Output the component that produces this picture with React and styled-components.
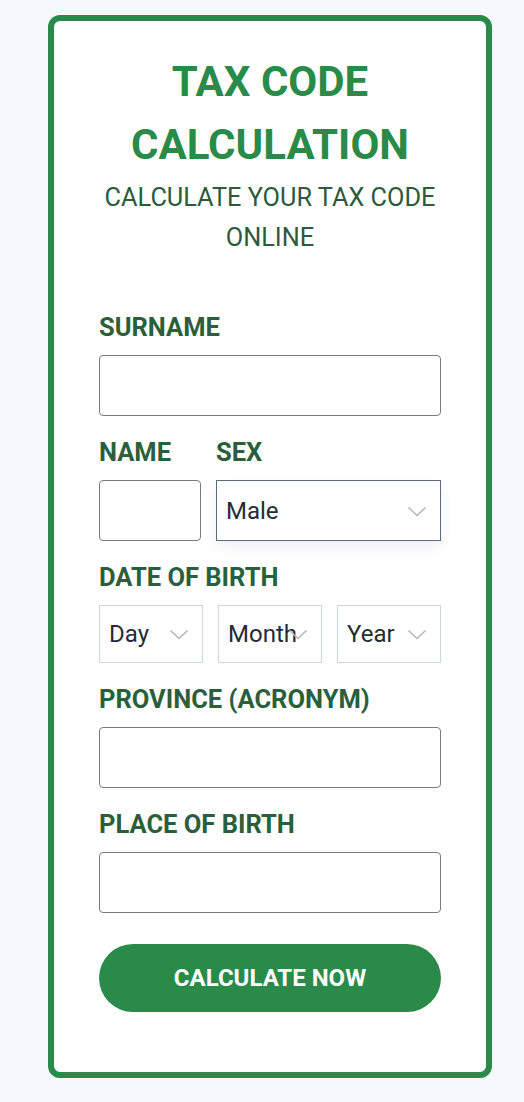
import React from "react";
import styled, { createGlobalStyle } from "styled-components";

const GlobalStyle = createGlobalStyle`
  html, body {
    margin: 0;
    padding: 0;
    background: #f5f8fc;
    font-family: Roboto, "Liberation Sans", Arial, sans-serif;
  }
`;

const Page = styled.div`
  min-height: 1102px;
  padding: 15px 0 0 48px;
  box-sizing: border-box;
`;

const Card = styled.form`
  width: 444px;
  height: 1063px;
  box-sizing: border-box;
  background: #ffffff;
  border: 6px solid #2a8a4a;
  border-radius: 12px;
  padding: 29px 45px 0;
  display: flex;
  flex-direction: column;
`;

const Title = styled.h1`
  margin: 0;
  text-align: center;
  color: #2a8a4a;
  font-size: 42px;
  line-height: 63px;
  font-weight: 700;
`;

const Subtitle = styled.p`
  margin: 2px 0 54px;
  text-align: center;
  color: #2b5a3c;
  font-size: 25.3px;
  line-height: 40px;
  font-weight: 400;
`;

const Field = styled.div`
  display: flex;
  flex-direction: column;
  margin-bottom: 21px;
  flex: ${(p) => p.$flex || "none"};
  min-width: 0;
`;

const Row = styled.div`
  display: flex;
  gap: 15px;
`;

const Label = styled.label`
  color: #2b5e3b;
  font-size: 25.5px;
  line-height: 30px;
  font-weight: 700;
  margin-bottom: 13px;
`;

const TextInput = styled.input`
  height: 61px;
  width: ${(p) => p.$width || "100%"};
  box-sizing: border-box;
  border: 1px solid #7a7a7a;
  border-radius: 4px;
  background: #fff;
  font: inherit;
  font-size: 24px;
  padding: 0 10px;
`;

const SelectWrap = styled.div`
  position: relative;
  flex: 1;
  min-width: 0;
`;

const Select = styled.select`
  appearance: none;
  width: 100%;
  height: ${(p) => (p.$light ? "58px" : "61px")};
  box-sizing: border-box;
  border: 1px solid ${(p) => (p.$light ? "#cbd6de" : "#5c6b7c")};
  border-radius: 0;
  background: #fff;
  color: #252c36;
  font: inherit;
  font-size: 24px;
  padding: 0 0 0 9px;
  box-shadow: ${(p) => (p.$light ? "none" : "0 6px 12px rgba(20, 40, 60, 0.07)")};
`;

const Chevron = styled.svg`
  position: absolute;
  right: 14px;
  top: 50%;
  width: 20px;
  height: 11px;
  margin-top: -5px;
  pointer-events: none;
`;

const Button = styled.button`
  margin-top: 10px;
  height: 68px;
  border: none;
  border-radius: 34px;
  background: #2a8a4a;
  color: #ffffff;
  font: inherit;
  font-size: 24px;
  font-weight: 700;
  cursor: pointer;
`;

const Arrow = () => (
  <Chevron viewBox="0 0 20 11" fill="none">
    <path d="M1.5 1.5 L10 9.5 L18.5 1.5" stroke="#b5b9bd" strokeWidth="1.6" />
  </Chevron>
);

const DropDown = ({ light, children }) => (
  <SelectWrap>
    <Select $light={light}>{children}</Select>
    <Arrow />
  </SelectWrap>
);

export default function App() {
  return (
    <>
      <GlobalStyle />
      <Page>
        <Card onSubmit={(e) => e.preventDefault()}>
          <Title>
            TAX CODE
            <br />
            CALCULATION
          </Title>
          <Subtitle>
            CALCULATE YOUR TAX CODE
            <br />
            ONLINE
          </Subtitle>

          <Field>
            <Label>SURNAME</Label>
            <TextInput type="text" />
          </Field>

          <Row>
            <Field>
              <Label>NAME</Label>
              <TextInput type="text" $width="102px" />
            </Field>
            <Field $flex="1">
              <Label>SEX</Label>
              <DropDown>
                <option>Male</option>
                <option>Female</option>
              </DropDown>
            </Field>
          </Row>

          <Field>
            <Label>DATE OF BIRTH</Label>
            <Row>
              <DropDown light>
                <option>Day</option>
              </DropDown>
              <DropDown light>
                <option>Month</option>
              </DropDown>
              <DropDown light>
                <option>Year</option>
              </DropDown>
            </Row>
          </Field>

          <Field>
            <Label>PROVINCE (ACRONYM)</Label>
            <TextInput type="text" />
          </Field>

          <Field>
            <Label>PLACE OF BIRTH</Label>
            <TextInput type="text" />
          </Field>

          <Button type="submit">CALCULATE NOW</Button>
        </Card>
      </Page>
    </>
  );
}
